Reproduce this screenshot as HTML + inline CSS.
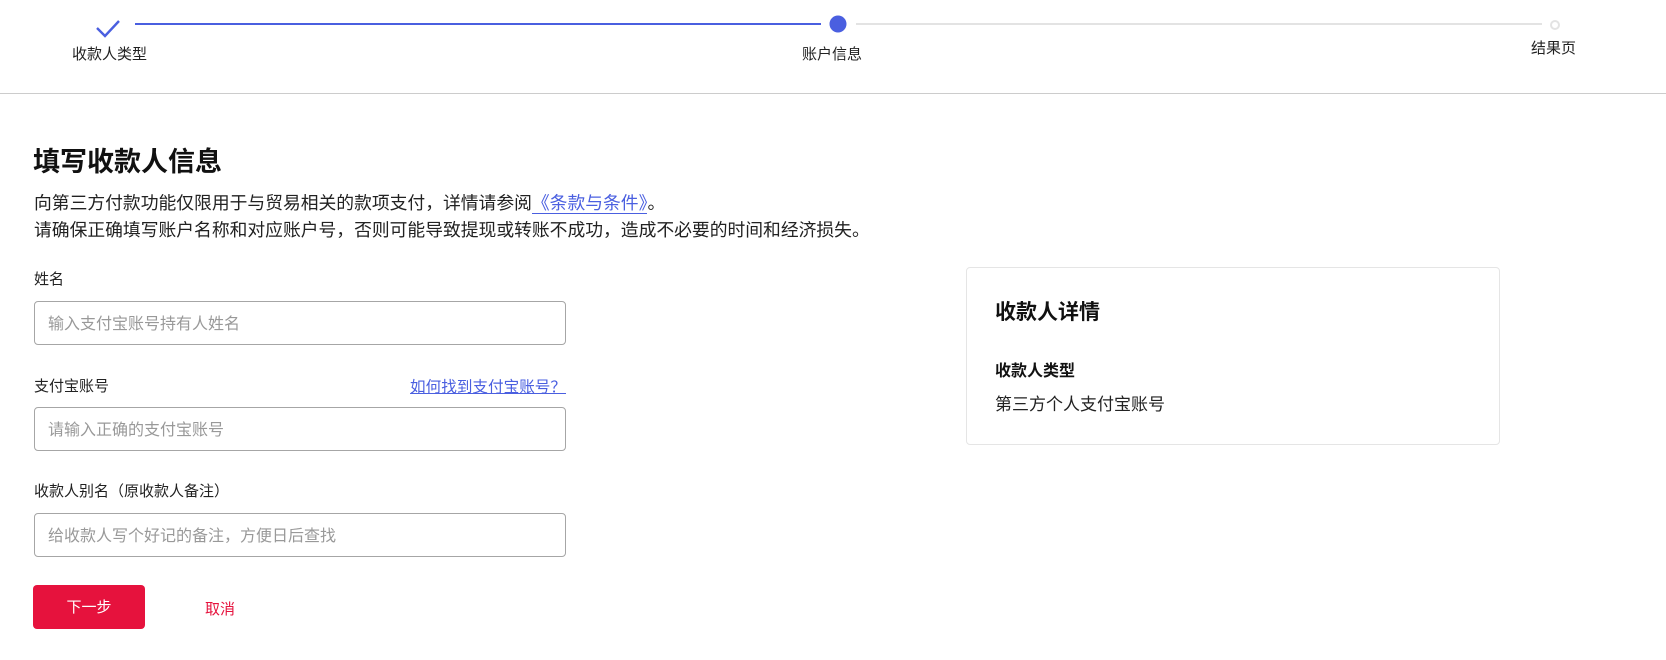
<!DOCTYPE html>
<html><head><meta charset="utf-8"><style>
*{margin:0;padding:0;box-sizing:border-box}
body{width:1666px;height:660px;background:#fff;font-family:"Liberation Sans","Noto Sans CJK SC",sans-serif;color:#222;position:relative;overflow:hidden}
.a{position:absolute;white-space:nowrap}
.lbl{font-size:15px;color:#222}
.inp{position:absolute;left:34px;width:532px;height:44px;border:1px solid #a6a6a6;border-radius:4px;font-size:16px;color:#999;padding-left:13px;line-height:46px}
</style></head><body>
<svg class="a" style="left:0;top:0" width="1666" height="94">
<path d="M97 28 L105 36 L119 21" fill="none" stroke="#4a5fe0" stroke-width="2.4"/>
<line x1="135" y1="24" x2="821" y2="24" stroke="#4a5fe0" stroke-width="2"/>
<circle cx="838" cy="24" r="8.5" fill="#4a5fe0"/>
<line x1="856" y1="24" x2="1542" y2="24" stroke="#e3e3e3" stroke-width="2"/>
<circle cx="1555" cy="25" r="4" fill="none" stroke="#e3e3e3" stroke-width="2"/>
</svg>
<div class="a lbl" style="left:72px;top:43px">收款人类型</div>
<div class="a lbl" style="left:802px;top:43px">账户信息</div>
<div class="a lbl" style="left:1531px;top:37px">结果页</div>
<div class="a" style="left:0;top:93px;width:1666px;height:1px;background:#ccc"></div>
<div class="a" style="left:33px;top:140px;font-size:27px;font-weight:bold;color:#111">填写收款人信息</div>
<div class="a" style="left:34px;top:189px;font-size:17.8px;color:#222">向第三方付款功能仅限用于与贸易相关的款项支付，详情请参阅<span style="color:#4a5fe0;border-bottom:1px solid #4a5fe0">《条款与条件》</span>。</div>
<div class="a" style="left:34px;top:216px;font-size:17.8px;color:#222">请确保正确填写账户名称和对应账户号，否则可能导致提现或转账不成功，造成不必要的时间和经济损失。</div>
<div class="a lbl" style="left:34px;top:268px">姓名</div>
<div class="inp" style="top:301px">输入支付宝账号持有人姓名</div>
<div class="a lbl" style="left:34px;top:375px">支付宝账号</div>
<div class="a" style="right:1100px;top:375px;font-size:15.6px;color:#4a5fe0;text-decoration:underline">如何找到支付宝账号？</div>
<div class="inp" style="top:407px">请输入正确的支付宝账号</div>
<div class="a lbl" style="left:34px;top:480px">收款人别名（原收款人备注）</div>
<div class="inp" style="top:513px">给收款人写个好记的备注，方便日后查找</div>
<div class="a" style="left:33px;top:585px;width:112px;height:44px;background:#e6123d;border-radius:4px;color:#fff;font-size:15px;text-align:center;line-height:46px">下一步</div>
<div class="a" style="left:205px;top:598px;font-size:15px;color:#e6123d">取消</div>
<div class="a" style="left:966px;top:267px;width:534px;height:178px;border:1px solid #e5e5e5;border-radius:4px"></div>
<div class="a" style="left:995px;top:296px;font-size:21px;font-weight:bold;color:#111">收款人详情</div>
<div class="a" style="left:995px;top:357px;font-size:16px;font-weight:bold;color:#111">收款人类型</div>
<div class="a" style="left:995px;top:390px;font-size:17px;color:#222">第三方个人支付宝账号</div>
</body></html>
